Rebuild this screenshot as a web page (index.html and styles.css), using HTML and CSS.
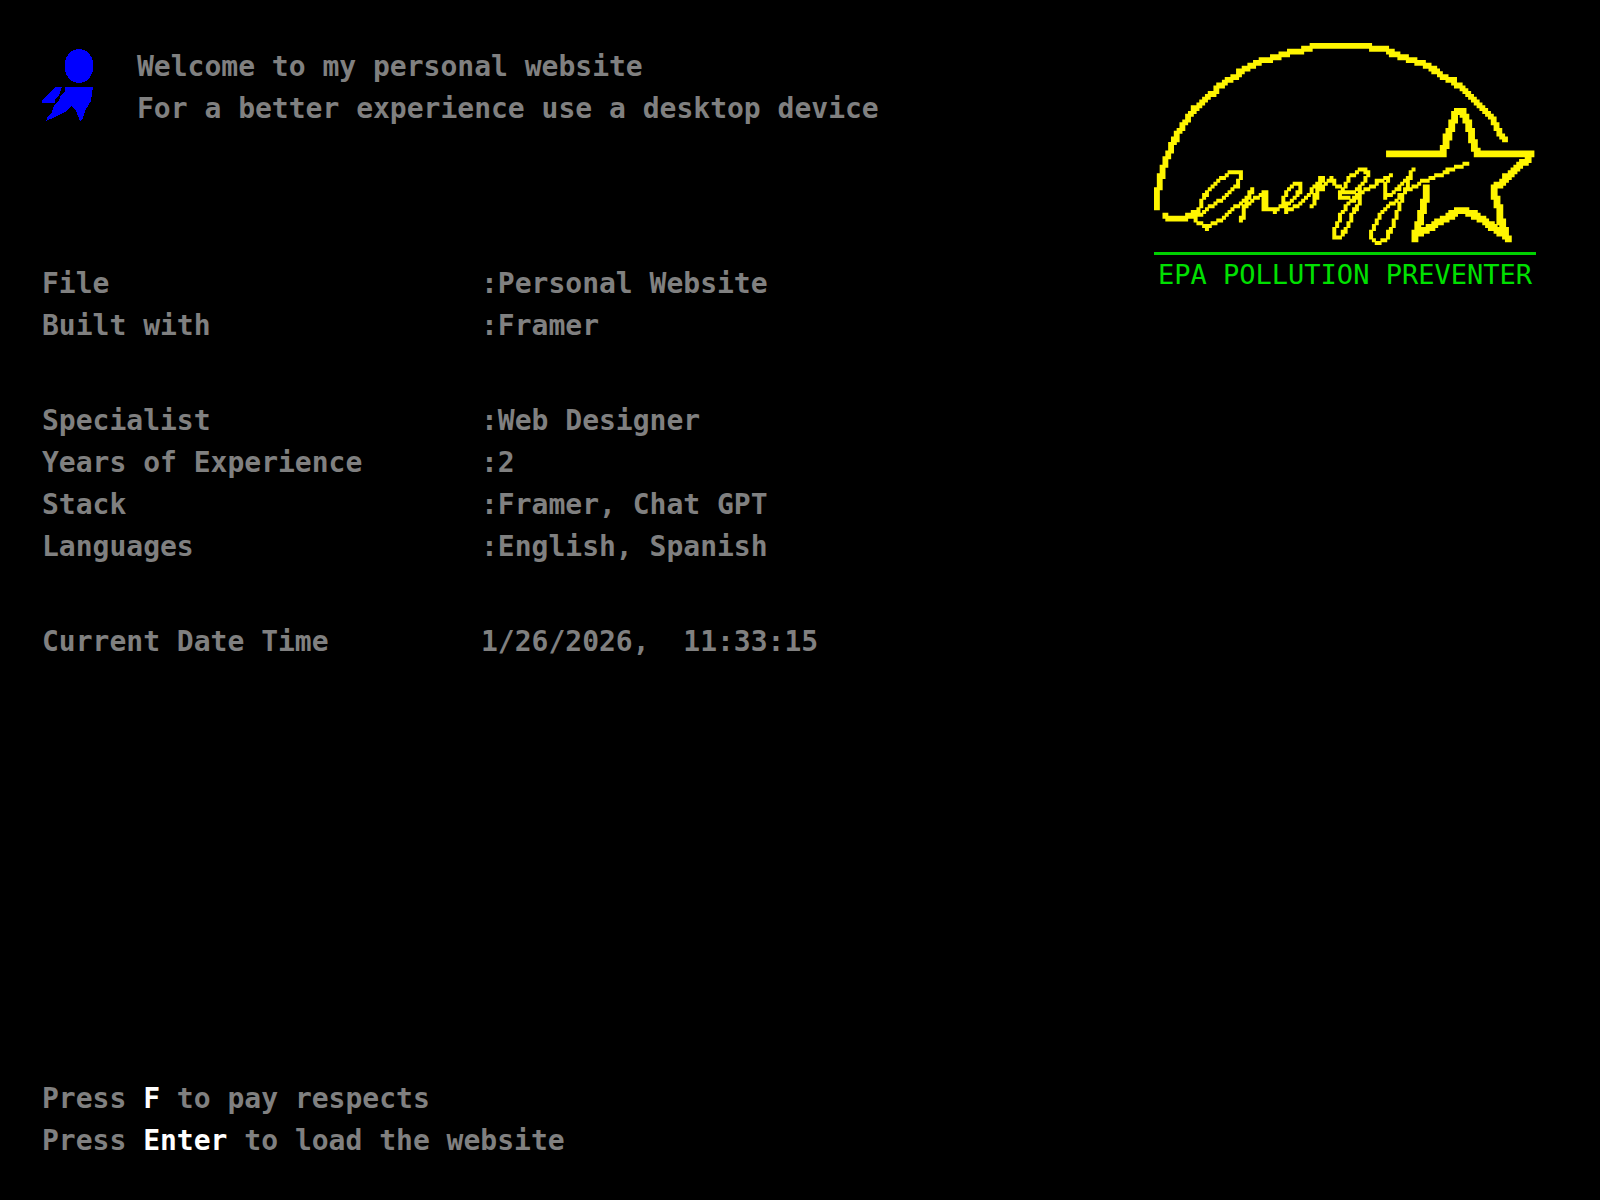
FILE: index.html
```
<!DOCTYPE html>
<html lang="en">
<head>
<meta charset="utf-8">
<meta name="viewport" content="width=device-width, initial-scale=1">
<title>Personal Website</title>
<link rel="stylesheet" href="styles.css">
</head>
<body>
<div class="screen">
  <div class="top">
    <main class="info">
      <header class="intro">
        <svg class="mascot" viewBox="0 0 52 74" shape-rendering="crispEdges" aria-hidden="true">
          <ellipse cx="37" cy="18" rx="14.5" ry="17"/>
          <path d="M23 39H51L49 53L44 61L41 70L38 73L34 63L29 58L25 63L13 69L4 73L6 68L10 64L12 58L17 52L19 47L23 44ZM13 39H20L17 47L13 52V55H0V53Z"/>
        </svg>
        <div>
          <p>Welcome to my personal website</p>
          <p>For a better experience use a desktop device</p>
        </div>
      </header>
      <dl class="specs">
        <dt>File</dt><dd>:Personal Website</dd>
        <dt>Built with</dt><dd>:Framer</dd>
      </dl>
      <dl class="specs">
        <dt>Specialist</dt><dd>:Web Designer</dd>
        <dt>Years of Experience</dt><dd>:2</dd>
        <dt>Stack</dt><dd>:Framer, Chat GPT</dd>
        <dt>Languages</dt><dd>:English, Spanish</dd>
      </dl>
      <dl class="specs">
        <dt>Current Date Time</dt><dd>1/26/2026,  11:33:15</dd>
      </dl>
    </main>
    <aside class="energy">
      <svg class="energy-art" viewBox="1154 43 382 202" role="img" aria-label="Energy star"></svg>
      <p class="energy-text">EPA POLLUTION PREVENTER</p>
    </aside>
  </div>
  <footer>
    <p>Press <kbd>F</kbd> to pay respects</p>
    <p>Press <kbd>Enter</kbd> to load the website</p>
  </footer>
</div>
<script src="logo.js"></script>
</body>
</html>
```

FILE: styles.css
```
* {
  box-sizing: border-box;
  margin: 0;
}

body {
  background: #000;
  color: #808080;
  font: bold 28px/42px "DejaVu Sans Mono", monospace;
}

.screen {
  display: flex;
  flex-direction: column;
  min-height: 100vh;
  padding: 43px 64px 38px 42px;
}

.top {
  display: flex;
  justify-content: space-between;
  gap: 40px;
}

.info {
  display: flex;
  flex-direction: column;
  gap: 53px;
  padding-top: 3px;
}

.intro {
  display: flex;
  gap: 43px;
  margin-bottom: 80px;
}

.mascot {
  width: 52px;
  height: 74px;
  margin-top: 2px;
  fill: #00f;
}

.specs {
  display: grid;
  grid-template-columns: 439px auto;
  white-space: pre;
}

.energy {
  flex: none;
  width: 382px;
}

.energy-art {
  display: block;
  width: 100%;
  fill: #fff500;
}

.energy-text {
  margin-top: 7px;
  border-top: 3px solid #00d000;
  color: #00e000;
  font-size: 27px;
  font-weight: normal;
  line-height: 40px;
  text-align: center;
  white-space: nowrap;
}

footer {
  margin-top: auto;
}

kbd {
  color: #fff;
  font: inherit;
}
```

FILE: logo.js
```
// Draws the logo's strokes as square dots on a coarse grid.
const CELL = 2.83;
const LEFT = 1154;
const TOP = 43;

// Each stroke: width in cells, side of a drawn dot, points.
const strokes = [
  // arc
  [2, 3, "1156,208 1156,200 1159,185 1162,172 1167,157 1172,145 1177,136 1180,130 1185,123 1190,115 1200,104 1208,97 1220,86 1233,78 1245,69 1257,63 1273,58 1282,55 1292,52 1306,49 1315,46 1340,46 1365,46 1383,49 1398,55 1407,58 1420,63 1433,69 1443,76 1455,82 1463,89 1475,101 1488,113 1498,130 1504,138"],
  // star
  [2, 4, "1388,153 1442,153 1447,135 1455,113 1458,110 1462,110 1467,123 1473,142 1477,153 1531,153 1517,168 1493,188 1497,203 1500,220 1507,237 1487,223 1470,212 1460,210 1450,215 1433,225 1413,237 1420,220 1423,203 1427,188"],
  // lead-in
  [2, 3, "1165,216 1167,218 1185,218 1193,214"],
  // e
  [1, 4, "1193,214 1202,213 1215,203 1227,195 1235,187 1241,175 1238,171 1230,171 1218,180 1205,193 1200,205 1196,213 1196,221 1205,227 1215,223 1225,215 1237,205 1247,197 1252,188"],
  // n
  [1, 4, "1252,188 1245,203 1241,219 1245,206 1255,198 1263,192 1263,209 1273,210"],
  [1, 4, "1249,192 1242,215"],
  [1, 4, "1265,192 1266,208"],
  // e
  [1, 4, "1273,210 1283,205 1295,198 1301,185 1295,183 1287,191 1283,200 1287,210 1298,205 1308,195 1320,177"],
  // r
  [1, 4, "1320,177 1316,190 1312,205 1318,192 1325,183 1332,177 1333,183 1341,188"],
  [1, 4, "1322,178 1318,190"],
  // g
  [1, 4, "1344,186 1349,178 1356,171 1362,169 1368,173 1365,180 1358,188 1350,192 1340,191 1340,197 1350,199 1360,195 1358,202 1352,215 1345,230 1340,236 1334,236 1334,228 1342,212 1350,201 1360,192 1375,183 1390,175"],
  // y
  [1, 4, "1390,175 1384,185 1384,198 1390,193 1400,186 1410,175"],
  [1, 4, "1412,169 1407,183 1405,190 1400,203 1390,230 1385,240 1378,243 1372,240 1371,231 1378,217 1387,206 1400,195 1412,186 1433,177 1453,168 1468,162"]
];

const squares = new Set();

function dot(x, y, size, side) {
  const off = Math.floor(size / 2);
  for (let i = 0; i < size; i++) {
    for (let j = 0; j < size; j++) {
      const px = LEFT + (x + i - off) * CELL;
      const py = TOP + (y + j - off) * CELL;
      squares.add(`M${px.toFixed(2)} ${py.toFixed(2)}h${side}v${side}h-${side}z`);
    }
  }
}

for (const [size, side, text] of strokes) {
  const shift = size % 2 ? 0.5 : 0;
  const points = text.split(" ").map(p => {
    const [x, y] = p.split(",").map(Number);
    return [(x - LEFT) / CELL - shift, (y - TOP) / CELL - shift];
  });
  for (let k = 1; k < points.length; k++) {
    const [x0, y0] = points[k - 1];
    const [x1, y1] = points[k];
    const n = Math.max(1, Math.ceil(Math.max(Math.abs(x1 - x0), Math.abs(y1 - y0))));
    for (let s = 0; s <= n; s++) {
      dot(Math.round(x0 + (x1 - x0) * s / n), Math.round(y0 + (y1 - y0) * s / n), size, side);
    }
  }
}

const path = document.createElementNS("http://www.w3.org/2000/svg", "path");
path.setAttribute("d", [...squares].join(""));
document.querySelector(".energy-art").append(path);
```
